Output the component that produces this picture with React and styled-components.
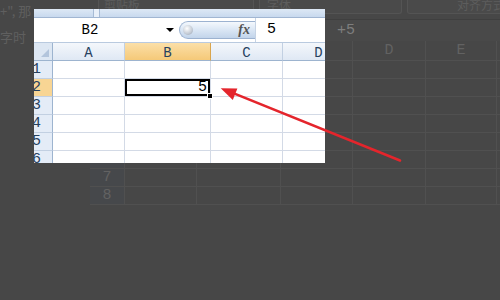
import React from 'react'
import styled, { createGlobalStyle } from 'styled-components'

const GlobalStyle = createGlobalStyle`
  html, body {
    margin: 0;
    padding: 0;
    background: #474747;
  }
  body {
    font-family: 'Liberation Mono', 'DejaVu Sans Mono', monospace;
  }
`

const Page = styled.div`
  position: relative;
  width: 500px;
  height: 300px;
  overflow: hidden;
  background: #474747;
  display: grid;
  grid-template-columns: 90px 1fr;
  align-items: start;
`

/* dimmed page behind the screenshot */
const DocText = styled.div`
  margin-top: -2px;
  font-family: 'Noto Sans CJK SC', sans-serif;
  font-size: 13px;
  line-height: 26px;
  color: #5f5f5f;
  white-space: nowrap;
`
const BgSheet = styled.div`
  display: flex;
  flex-direction: column;
  min-width: 0;
`
const BgRibbon = styled.div`
  height: 15px;
  display: flex;
  gap: 5px;
  padding-left: 8px;
`
const BgGroup = styled.div`
  flex: none;
  width: ${p => p.w}px;
  height: 14px;
  box-sizing: border-box;
  padding-left: ${p => p.pad}px;
  border: 1px solid #545454;
  border-top: none;
  border-radius: 0 0 3px 3px;
  background: #4a4a4a;
  font-family: 'Noto Sans CJK SC', sans-serif;
  font-size: 12px;
  line-height: 9px;
  color: #5d5d5d;
  white-space: nowrap;
`
const BgFormula = styled.div`
  margin-top: 4px;
  height: 21px;
  border-top: 1px solid #3f3f3f;
  background: #494949;
  padding-left: 247px;
  font-size: 15px;
  line-height: 21px;
  color: #7e7e7e;
`
const BgRow = styled.div`
  display: flex;
  height: ${p => p.h}px;
`
const BgCell = styled.div`
  flex: none;
  width: ${p => p.w}px;
  box-sizing: border-box;
  border-right: 1px solid #505050;
  border-bottom: 1px solid #505050;
  background: ${p => (p.head ? '#46484b' : 'transparent')};
  font-size: 15px;
  line-height: ${p => p.lh || 18}px;
  text-align: center;
  color: #626262;
`

/* the bright Excel screenshot laid over the page */
const Window = styled.div`
  position: absolute;
  left: 34px;
  top: 9px;
  width: 291px;
  height: 154px;
  overflow: hidden;
  background: #fff;
  display: flex;
  flex-direction: column;
`
const WinRibbon = styled.div`
  flex: none;
  height: 8px;
  display: flex;
  background: linear-gradient(#dde8f5, #c8d9ee);
  border-bottom: 1px solid #a1b6d2;
`
const RibbonNotch = styled.div`
  margin-left: 59px;
  width: 5px;
  border-left: 1px solid #a7bbd5;
  border-right: 1px solid #a7bbd5;
  background: #e8eff8;
`
const FormulaBar = styled.div`
  flex: none;
  height: 24px;
  display: flex;
  align-items: center;
  background: #fff;
  border-bottom: 1px solid #b9cadf;
`
const NameText = styled.div`
  flex: none;
  width: 112px;
  text-align: center;
  font-size: 14px;
  color: #000;
`
const Caret = styled.span`
  flex: none;
  margin-left: 20px;
  width: 0;
  height: 0;
  border-left: 4px solid transparent;
  border-right: 4px solid transparent;
  border-top: 4px solid #000;
`
const FxPill = styled.div`
  flex: none;
  margin-left: 5px;
  width: 76px;
  height: 18px;
  box-sizing: border-box;
  padding: 0 5px 0 3px;
  display: flex;
  align-items: center;
  justify-content: space-between;
  border: 1px solid #9cb2d0;
  border-right: none;
  border-radius: 9px 0 0 9px;
  background: linear-gradient(#f4f8fd, #dae6f4 50%, #c2d4ea);
`
const Knob = styled.span`
  width: 10px;
  height: 10px;
  border-radius: 50%;
  background: radial-gradient(circle at 40% 35%, #ffffff, #c3cad4 60%, #8d98a6);
`
const Fx = styled.span`
  font-family: 'Liberation Serif', serif;
  font-style: italic;
  font-weight: bold;
  font-size: 14px;
  color: #555;
`
const FormulaInput = styled.div`
  flex: 1;
  align-self: stretch;
  border-left: 1px solid #c6d3e4;
  padding-left: 11px;
  font-size: 15px;
  line-height: 24px;
  color: #000;
`
const GridRow = styled.div`
  flex: none;
  display: flex;
  height: ${p => p.h || 18}px;
`
const HeadCell = styled.div`
  flex: none;
  width: ${p => p.w}px;
  box-sizing: border-box;
  padding-top: 2px;
  border-right: 1px solid ${p => (p.active ? '#d9a54e' : '#c2d0e2')};
  border-bottom: 1px solid #9db4cf;
  background: ${p =>
    p.active
      ? 'linear-gradient(#fbdfa8, #f5c978)'
      : 'linear-gradient(#f4f7fb, #dfe8f4)'};
  font-size: 14px;
  line-height: 16px;
  text-align: center;
  color: #27415f;
`
const Corner = styled.div`
  flex: none;
  width: 19px;
  box-sizing: border-box;
  display: flex;
  align-items: flex-end;
  justify-content: flex-end;
  padding: 0 3px 3px 0;
  border-right: 1px solid #9db4cf;
  border-bottom: 1px solid #9db4cf;
  background: #dde7f3;
`
const CornerMark = styled.span`
  width: 0;
  height: 0;
  border-left: 8px solid transparent;
  border-bottom: 8px solid #b3c5dc;
`
const RowHead = styled.div`
  flex: none;
  width: 19px;
  box-sizing: border-box;
  overflow: hidden;
  text-indent: -2px;
  border-right: 1px solid #9db4cf;
  border-bottom: 1px solid #c2d0e2;
  background: ${p => (p.active ? '#f8d594' : '#e4ecf7')};
  font-size: 15px;
  line-height: 18px;
  color: #27415f;
`
const Cell = styled.div`
  flex: none;
  position: relative;
  width: ${p => p.w}px;
  box-sizing: border-box;
  padding-right: 3px;
  border-right: 1px solid #d3dae6;
  border-bottom: 1px solid #d3dae6;
  font-size: 15px;
  line-height: 17px;
  text-align: right;
  color: #000;
  ${p =>
    p.active &&
    `
    z-index: 1;
    box-shadow: inset 0 0 0 2px #000;
    &::after {
      content: '';
      position: absolute;
      right: -3px;
      bottom: -3px;
      width: 4px;
      height: 4px;
      background: #000;
      border: 1px solid #fff;
    }
  `}
`

const Arrow = styled.svg`
  position: absolute;
  left: 0;
  top: 0;
  pointer-events: none;
`

const bgCols = [35, 72, 84, 72, 73, 71, 60]
const bgHead = ['', '', '', '', 'D', 'E', '']
const cols = [
  { key: 'A', w: 72 },
  { key: 'B', w: 86 },
  { key: 'C', w: 72 },
  { key: 'D', w: 72 }
]
const rows = [1, 2, 3, 4, 5, 6]

const App = () => (
  <>
    <GlobalStyle />
    <Page>
      <DocText>
        <div>+", 那</div>
        <div>字时</div>
      </DocText>
      <BgSheet>
        <BgRibbon>
          <BgGroup w={156} pad={5}>剪贴板</BgGroup>
          <BgGroup w={143} pad={7}>字体</BgGroup>
          <BgGroup w={103} pad={49}>对齐方式</BgGroup>
        </BgRibbon>
        <BgFormula>+5</BgFormula>
        <BgRow h={20}>
          {bgCols.map((w, i) => (
            <BgCell key={i} w={w} lh={19} head={i === 0}>
              {bgHead[i]}
            </BgCell>
          ))}
        </BgRow>
        {[1, 2, 3, 4, 5, 6, 7, 8].map(n => (
          <BgRow key={n} h={18}>
            {bgCols.map((w, i) => (
              <BgCell key={i} w={w} head={i === 0}>
                {i === 0 ? n : ''}
              </BgCell>
            ))}
          </BgRow>
        ))}
      </BgSheet>

      <Window>
        <WinRibbon>
          <RibbonNotch />
        </WinRibbon>
        <FormulaBar>
          <NameText>B2</NameText>
          <Caret />
          <FxPill>
            <Knob />
            <Fx>fx</Fx>
          </FxPill>
          <FormulaInput>5</FormulaInput>
        </FormulaBar>
        <GridRow>
          <Corner>
            <CornerMark />
          </Corner>
          {cols.map(c => (
            <HeadCell key={c.key} w={c.w} active={c.key === 'B'}>
              {c.key}
            </HeadCell>
          ))}
        </GridRow>
        {rows.map(r => (
          <GridRow key={r}>
            <RowHead active={r === 2}>{r}</RowHead>
            {cols.map(c => {
              const active = r === 2 && c.key === 'B'
              return (
                <Cell key={c.key} w={c.w} active={active}>
                  {active ? '5' : ''}
                </Cell>
              )
            })}
          </GridRow>
        ))}
      </Window>

      <Arrow width='500' height='300' viewBox='0 0 500 300'>
        <line
          x1='400'
          y1='160.5'
          x2='232'
          y2='92.6'
          stroke='#e4252c'
          strokeWidth='2.6'
          strokeLinecap='round'
        />
        <polygon points='220.7,88.2 232.8,99.9 237.4,88.6' fill='#e4252c' />
      </Arrow>
    </Page>
  </>
)

export default App
